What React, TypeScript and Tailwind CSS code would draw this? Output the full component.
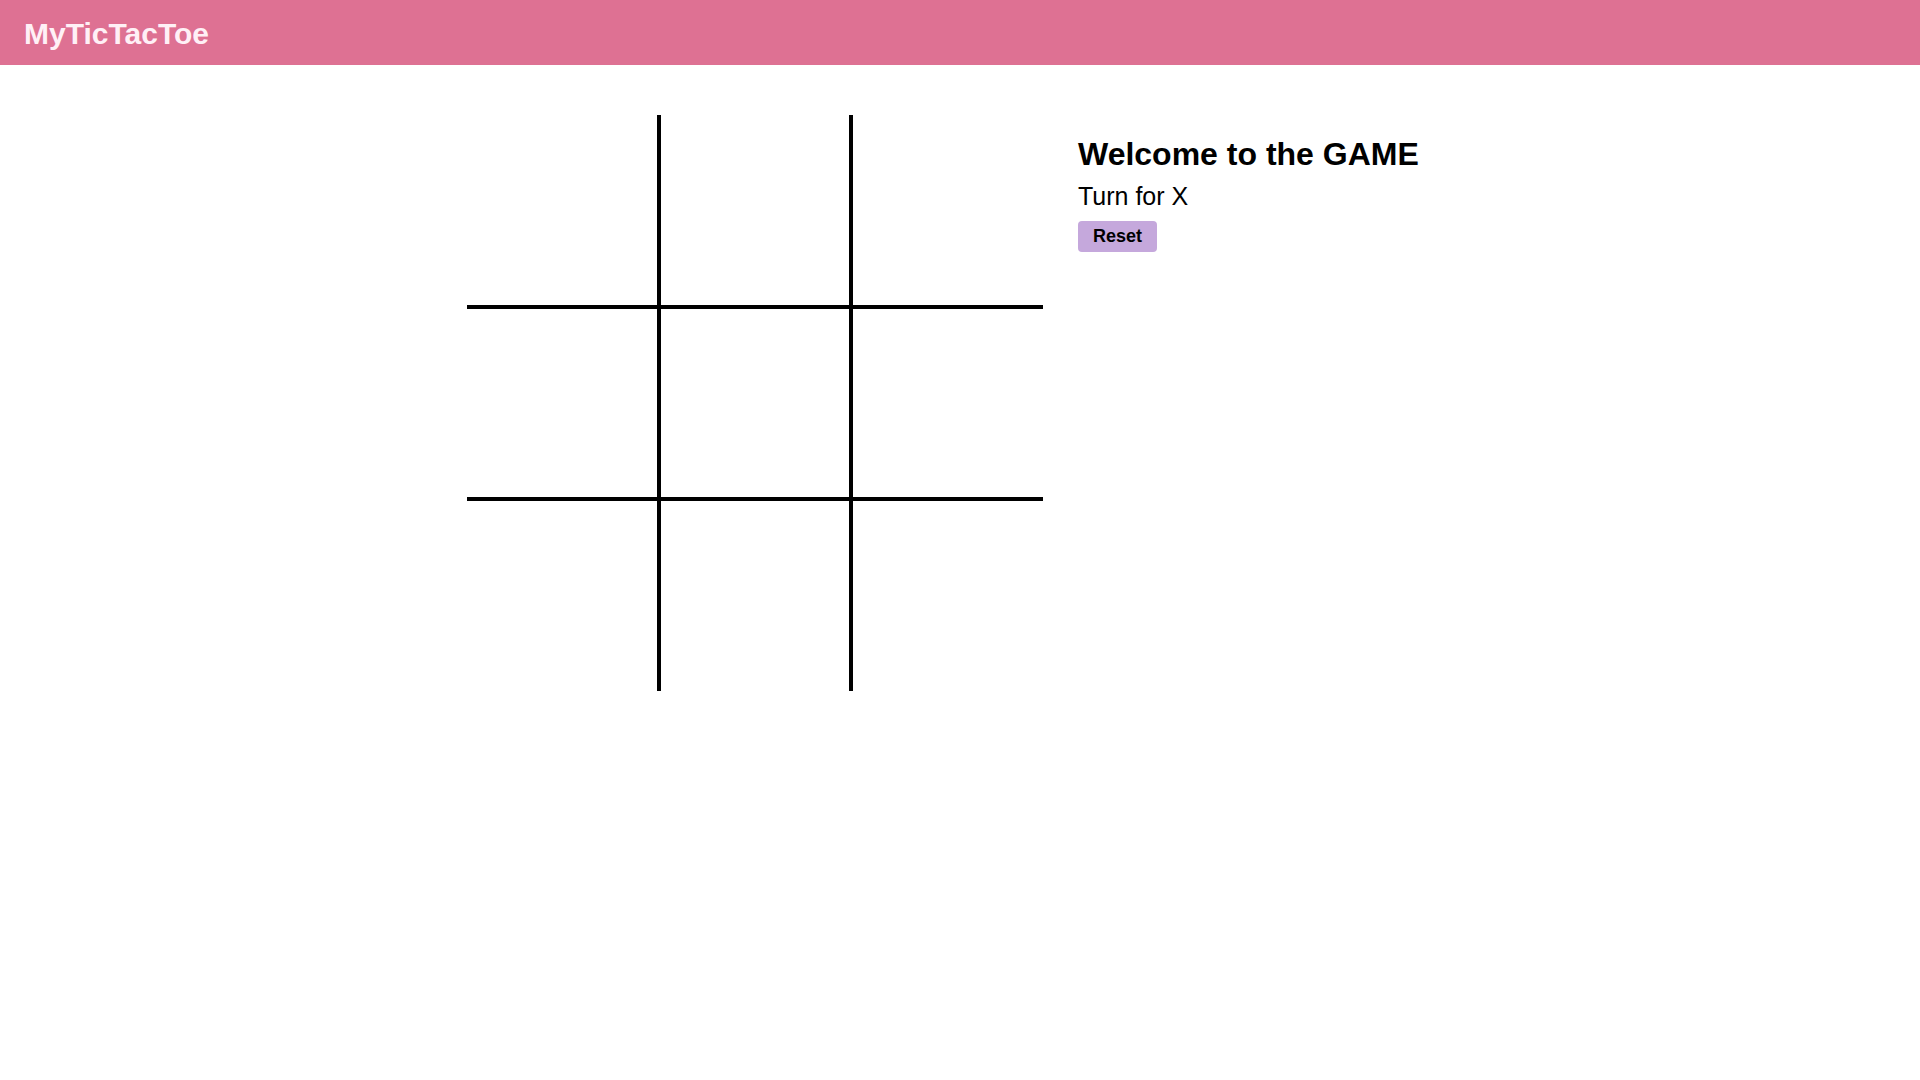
import React, { useState } from 'react'

type Cell = 'X' | 'O' | null

// borders so that every cell is 192px and inner lines meet at 4px
const cellBorders = [
  'border-r-2 border-b-2',
  'border-x-2 border-b-2',
  'border-l-2 border-b-2',
  'border-r-2 border-y-2',
  'border-2',
  'border-l-2 border-y-2',
  'border-r-2 border-t-2',
  'border-x-2 border-t-2',
  'border-l-2 border-t-2',
]

function Board({ cells, onPlay }: { cells: Cell[]; onPlay: (i: number) => void }) {
  return (
    <div className="grid grid-cols-[192px_192px_192px] grid-rows-[192px_192px_192px]">
      {cells.map((value, i) => (
        <button
          key={i}
          onClick={() => onPlay(i)}
          className={`flex items-center justify-center border-black bg-white text-[96px] font-bold text-black ${cellBorders[i]}`}
        >
          {value}
        </button>
      ))}
    </div>
  )
}

export default function App() {
  const [cells, setCells] = useState<Cell[]>(Array(9).fill(null))
  const [turn, setTurn] = useState<'X' | 'O'>('X')

  const play = (i: number) => {
    if (cells[i]) return
    const next = cells.slice()
    next[i] = turn
    setCells(next)
    setTurn(turn === 'X' ? 'O' : 'X')
  }

  const reset = () => {
    setCells(Array(9).fill(null))
    setTurn('X')
  }

  return (
    <div className="min-h-screen bg-white font-['Liberation_Sans',Arial,sans-serif] text-black">
      {/* Header */}
      <header className="flex h-[65px] items-center bg-[#de7193] px-6 pt-[2px]">
        <h1 className="text-[30px] font-bold leading-[34px] text-[#fff0f6]">MyTicTacToe</h1>
      </header>

      {/* Game */}
      <main className="flex justify-center gap-[35px] pt-[50px]">
        <Board cells={cells} onPlay={play} />

        <div className="flex w-[375px] flex-col items-start pt-[21px]">
          <h2 className="text-[32px] font-bold leading-[37px]">Welcome to the GAME</h2>
          <p className="mt-[9px] text-[25px] leading-[29px]">Turn for {turn}</p>
          <button
            onClick={reset}
            className="mt-[10px] h-[31px] rounded-[4px] bg-[#c5a8dc] px-[15px] text-[18px] font-bold leading-[31px]"
          >
            Reset
          </button>
        </div>
      </main>
    </div>
  )
}
